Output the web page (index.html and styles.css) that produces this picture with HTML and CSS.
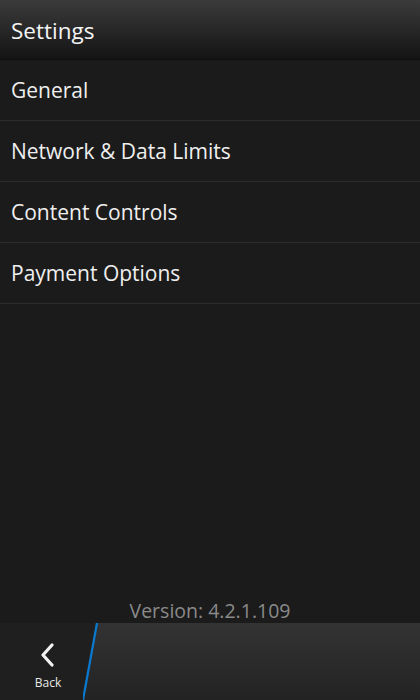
FILE: index.html
```html
<!DOCTYPE html>
<html lang="en">
<head>
  <meta charset="UTF-8">
  <meta name="viewport" content="width=device-width, initial-scale=1">
  <title>Settings</title>
  <link rel="stylesheet" href="styles.css">
</head>
<body>
  <header class="title-bar">
    <h1>Settings</h1>
  </header>
  <ul class="menu">
    <li>General</li>
    <li>Network &amp; Data Limits</li>
    <li>Content Controls</li>
    <li>Payment Options</li>
  </ul>
  <div class="spacer"></div>
  <p class="version">Version: 4.2.1.109</p>
  <footer class="action-bar">
    <div class="back">
      <svg class="back-icon" width="16" height="24" viewBox="0 0 16 24">
        <polyline points="12,2 3,12 12,22" fill="none" stroke="#f2f2f2" stroke-width="3.2" stroke-linecap="round" stroke-linejoin="round"/>
      </svg>
      <span>Back</span>
    </div>
    <svg class="slash" width="16" height="77" viewBox="0 0 16 77">
      <polygon points="0,0 14,0 0,77" fill="#1f1f1f"/>
      <line x1="14" y1="0" x2="0" y2="77" stroke="#0a7ad0" stroke-width="2.2"/>
    </svg>
    <div class="rest"></div>
  </footer>
</body>
</html>
```

FILE: styles.css
```css
html, body {
  margin: 0;
  padding: 0;
  height: 100%;
}
body {
  font-family: 'Open Sans', 'Noto Sans', sans-serif;
  background: #1b1b1b;
  color: #f0f0f0;
  display: flex;
  flex-direction: column;
  height: 700px;
  overflow: hidden;
}
.title-bar {
  height: 60px;
  background: linear-gradient(to bottom, #3b3b3b, #141414);
  border-bottom: 1px solid #0e0e0e;
  display: flex;
  align-items: center;
  padding: 2px 11px 0;
  box-sizing: border-box;
}
.title-bar h1 {
  margin: 0;
  font-size: 22.5px;
  font-weight: normal;
  color: #f4f4f4;
}
.menu {
  list-style: none;
  margin: 0;
  padding: 0;
}
.menu li {
  height: 60px;
  line-height: 60px;
  padding: 0 11px;
  font-size: 21px;
  color: #efefef;
  border-bottom: 1px solid #2c2c2c;
}
.spacer {
  flex: 1;
}
.version {
  margin: 0 0 1px;
  height: 22px;
  line-height: 22px;
  text-align: center;
  font-size: 19.5px;
  color: #8a8a8a;
}
.action-bar {
  height: 77px;
  display: flex;
  background: linear-gradient(to bottom, #333333, #232323);
}
.back {
  width: 83px;
  background: #1f1f1f;
  display: flex;
  flex-direction: column;
  align-items: center;
  padding-left: 13px;
  box-sizing: border-box;
}
.back-icon {
  margin-top: 20px;
}
.back span {
  margin-top: 7px;
  font-size: 12px;
  color: #e8e8e8;
}
.slash {
  display: block;
  flex-shrink: 0;
}
.rest {
  flex: 1;
}
```
